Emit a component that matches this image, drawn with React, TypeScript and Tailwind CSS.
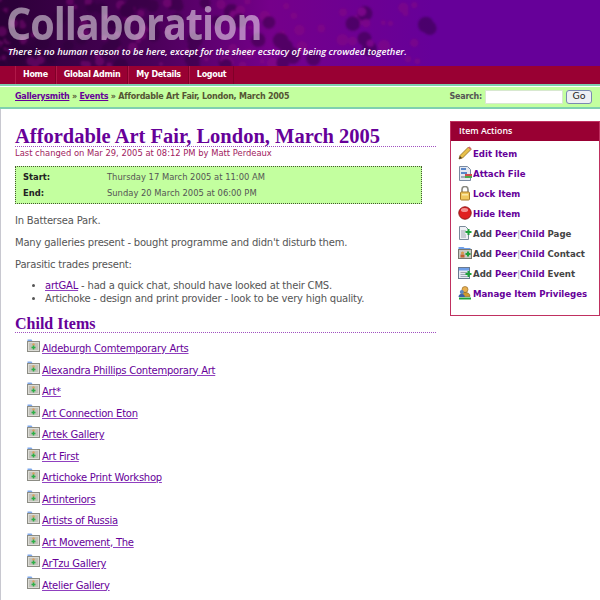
import React from "react";

const V = "font-['DejaVu_Sans','Liberation_Sans',sans-serif]";
const G = "font-['Liberation_Serif',serif]";

function FolderIcon() {
  return (
    <svg width="13" height="13" viewBox="0 0 13 13" className="shrink-0">
      <path d="M.5 .5h4l1 1.500h6v2H.5z" fill="#7fa8ea" />
      <rect x="0.5" y="2.500" width="12" height="10" fill="#dcdcd6" stroke="#8c8c84" />
      <rect x="2" y="4" width="9" height="7" fill="#c2c2ba" />
      <circle cx="6.500" cy="5.500" r="1.200" fill="#d8a060" />
      <path d="M6.500 6.500v4M4.500 8.500h4" stroke="#2bae45" strokeWidth="1.500" />
    </svg>
  );
}

function ActionIcon({ kind }: { kind: string }) {
  if (kind === "edit")
    return (
      <svg width="14" height="15" viewBox="0 0 14 15">
        <path d="M1 13l1-3.500L10.500 1 13 3.500 4.500 12z" fill="#e8c04a" stroke="#8a6a20" strokeWidth="0.8" />
        <path d="M1 13l1-3 2 2z" fill="#4a3a20" />
        <path d="M10 1.500l2.500 2.500 1-1.500L11.500 .5z" fill="#d06a6a" />
      </svg>
    );
  if (kind === "file")
    return (
      <svg width="14" height="15" viewBox="0 0 14 15">
        <path d="M1.500 .5h8l3 3v11h-11z" fill="#e4e8f0" stroke="#7a8aa0" />
        <rect x="3" y="2" width="5" height="2" fill="#5a86c8" />
        <rect x="3" y="6" width="6" height="2" fill="#5a86c8" />
        <rect x="7" y="8" width="7" height="2" fill="#d04a4a" />
        <rect x="7" y="10" width="7" height="2" fill="#4aa84a" />
        <rect x="3" y="10" width="4" height="2" fill="#a0a8b8" />
      </svg>
    );
  if (kind === "lock")
    return (
      <svg width="14" height="15" viewBox="0 0 14 15">
        <path d="M4 6V3.500a3 3 0 0 1 6 0V6" fill="none" stroke="#8a8a80" strokeWidth="1.600" />
        <rect x="2.500" y="6" width="9" height="8" rx="1" fill="#f0c860" stroke="#a87a28" />
        <rect x="4" y="8" width="6" height="1.500" fill="#fae8a8" />
      </svg>
    );
  if (kind === "hide")
    return (
      <svg width="14" height="15" viewBox="0 0 14 15">
        <circle cx="7" cy="7" r="6.200" fill="#e02020" stroke="#901818" />
        <ellipse cx="6.500" cy="4" rx="3.600" ry="2" fill="#f49090" />
      </svg>
    );
  if (kind === "page")
    return (
      <svg width="14" height="15" viewBox="0 0 14 15">
        <path d="M1.500 .5h6l3 3v10h-9z" fill="#eef0f4" stroke="#7a8a9a" />
        <path d="M3 5h5M3 7h4M3 9h5M3 11h5" stroke="#a0a8b4" />
        <path d="M10.500 3v6M7.500 6h6" stroke="#1ea03a" strokeWidth="2" />
      </svg>
    );
  if (kind === "contact")
    return (
      <svg width="14" height="15" viewBox="0 0 14 15">
        <path d="M.5 1h5l1 1h6v3H.5z" fill="#6f9fe8" />
        <rect x="0.5" y="3.500" width="13" height="9" fill="#c9c9c4" stroke="#77776f" />
        <circle cx="4.500" cy="7" r="1.600" fill="#d89a50" />
        <rect x="2.500" y="8.500" width="4" height="3" fill="#c06030" />
        <path d="M10 5.500v5M7.500 8h5" stroke="#1ea03a" strokeWidth="2" />
      </svg>
    );
  if (kind === "event")
    return (
      <svg width="14" height="15" viewBox="0 0 14 15">
        <rect x="0.5" y="1.500" width="11" height="11" fill="#e6eaf2" stroke="#6a7a90" />
        <rect x="1" y="2" width="10" height="2.500" fill="#6f9fe8" />
        <path d="M2.500 6.500h7M2.500 8.500h7M2.500 10.500h7" stroke="#a0a8b4" />
        <path d="M10.500 5v6M7.500 8h6" stroke="#1ea03a" strokeWidth="2" />
      </svg>
    );
  return (
    <svg width="14" height="15" viewBox="0 0 14 15">
      <circle cx="7" cy="3.500" r="3" fill="#e8b050" stroke="#8a6020" strokeWidth="0.6" />
      <path d="M2 10.500c0-3 2-4 5-4s5 1 5 4z" fill="#d09a30" stroke="#7a5a18" strokeWidth="0.6" />
      <circle cx="3.800" cy="6" r="2" fill="#5a86c8" />
      <path d="M.5 11c0-2 1.400-3 3.300-3s3 1 3 3z" fill="#3a5ea8" />
      <path d="M1 12.500h12" stroke="#1ea03a" strokeWidth="2" />
    </svg>
  );
}

const children = [
  "Aldeburgh Comtemporary Arts",
  "Alexandra Phillips Contemporary Art",
  "Art*",
  "Art Connection Eton",
  "Artek Gallery",
  "Art First",
  "Artichoke Print Workshop",
  "Artinteriors",
  "Artists of Russia",
  "Art Movement, The",
  "ArTzu Gallery",
  "Atelier Gallery",
];

// Mottled crowd texture of the banner, computed once from a fixed seed.
const blotches = Array.from({ length: 170 }, (_, i) => {
  const a = Math.abs(Math.sin(i * 12.9898) * 43758.5453) % 1;
  const b = Math.abs(Math.sin(i * 78.233) * 24634.6345) % 1;
  const c = Math.abs(Math.sin(i * 39.425) * 11234.123) % 1;
  const x = a * a * 430;
  return { x, y: b * 66, r: 2 + c * 6, dark: x < 240 ? c > 0.5 : c > 0.7 };
});

function Plain({ kind, text }: { kind: string; text: string }) {
  return (
    <div className="flex h-5 items-center">
      <div className="flex w-[15px] -translate-y-[1px] justify-start"><ActionIcon kind={kind} /></div>
      <a className="font-bold text-[#660099]">{text}</a>
    </div>
  );
}

function Add({ kind, what }: { kind: string; what: string }) {
  return (
    <div className="flex h-5 items-center">
      <div className="flex w-[15px] -translate-y-[1px] justify-start"><ActionIcon kind={kind} /></div>
      <span className="font-bold text-[#444444]">
        Add <a className="text-[#660099]">Peer</a><span className="font-normal text-[#a9a9c0]">|</span><a className="text-[#660099]">Child</a> {what}
      </span>
    </div>
  );
}

export default function App() {
  return (
    <div className={`${V} h-[600px] w-[600px] overflow-hidden bg-white text-[10px] tracking-[-0.2px] text-[#555555]`}>
      <header className="relative h-[66px] overflow-hidden bg-[#660099]">
        <svg className="absolute inset-0" width="600" height="66" viewBox="0 0 600 66">
          <defs>
            <linearGradient id="fade" x1="0" x2="1" y1="0" y2="0">
              <stop offset="0" stopColor="#2c0038" />
              <stop offset="0.25" stopColor="#4a0058" />
              <stop offset="0.45" stopColor="#75008a" />
              <stop offset="0.72" stopColor="#660099" />
            </linearGradient>
            <filter id="bl"><feGaussianBlur stdDeviation="1.2" /></filter>
          </defs>
          <rect width="600" height="66" fill="url(#fade)" />
          <g filter="url(#bl)" opacity="0.45">
            {blotches.map((b, i) => (
              <circle key={i} cx={b.x} cy={b.y} r={b.r} fill={b.dark ? "#2c0038" : "#8a0a80"} />
            ))}
          </g>
        </svg>
        <div className="absolute top-px left-[6px] origin-left scale-x-[0.88] font-['Open_Sans',sans-serif] text-[45px] leading-[44px] font-bold tracking-[-1.2px] whitespace-nowrap text-white/50">
          Collaboration
        </div>
        <div className="absolute top-[45px] left-2 font-['Open_Sans',sans-serif] text-[9.4px] leading-[14px] font-semibold tracking-normal whitespace-nowrap text-white italic">
          There is no human reason to be here, except for the sheer ecstacy of being crowded together.
        </div>
      </header>

      <nav className="flex h-[18px] bg-[#990033] pl-[15px] text-[8px] font-bold tracking-[-0.3px] text-white">
        {["Home", "Global Admin", "My Details", "Logout"].map((n) => (
          <a key={n} className="flex items-center border-r border-l border-r-[#800028] border-l-[#b01848] px-[7px]">{n}</a>
        ))}
      </nav>

      <div className="flex h-[25px] items-center justify-between border-y-2 border-y-[#7fd0b0] bg-[#c3ff9f] pr-[8px] pl-[15px] text-[8px] tracking-[-0.25px] shadow-[inset_0_1px_0_#fff]">
        <div className="font-bold text-[#555533]">
          <a className="text-[#660099] underline">Gallerysmith</a> » <a className="text-[#660099] underline">Events</a> » Affordable Art Fair, London, March 2005
        </div>
        <div className="flex items-center font-bold">
          <span>Search:</span>
          <input className="mr-[3px] ml-[3px] h-[14px] w-[78px] border border-[#d8e8d0] bg-white" />
          <button className="flex h-[14px] w-[26px] items-center justify-center rounded-[3px] border border-[#7a8ab0] bg-[#eef0f4] text-[9.5px] font-normal tracking-normal text-[#222222]">Go</button>
        </div>
      </div>

      <div className="flex h-[491px] border-l border-[#c8c8d0] pl-[14px]">
        <main className="w-[421px] shrink-0 pt-[17px]">
          <h1 className={`${G} border-b border-dotted border-[#a050c0] text-[20.5px] leading-[20px] font-bold tracking-normal whitespace-nowrap text-[#660099]`}>
            Affordable Art Fair, London, March 2005
          </h1>
          <p className="text-[8.4px] leading-[12px] tracking-normal text-[#a02060]">Last changed on Mar 29, 2005 at 08:12 PM by Matt Perdeaux</p>
          <div className="mt-[7px] grid w-[407px] grid-cols-[84px_1fr] gap-y-[4px] border border-dotted border-[#445533] bg-[#c3ff9f] px-[7px] py-[4px] text-[8.4px] leading-[12px] tracking-normal">
            <b className="text-[#222222]">Start:</b><span>Thursday 17 March 2005 at 11:00 AM</span>
            <b className="text-[#222222]">End:</b><span>Sunday 20 March 2005 at 06:00 PM</span>
          </div>
          <p className="mt-[10px] leading-[13px]">In Battersea Park.</p>
          <p className="mt-[9px] leading-[13px]">Many galleries present - bought programme and didn't disturb them.</p>
          <p className="mt-[9px] leading-[13px]">Parasitic trades present:</p>
          <ul className="mt-[9px] list-disc pl-[30px] leading-[12.5px]">
            <li><a className="text-[#660099] underline decoration-[#9040c0]">artGAL</a> - had a quick chat, should have looked at their CMS.</li>
            <li>Artichoke - design and print provider - look to be very high quality.</li>
          </ul>
          <h2 className={`${G} mt-[10px] border-b border-dotted border-[#a050c0] text-[16px] leading-[17px] font-bold tracking-normal text-[#660099]`}>Child Items</h2>
          <ul className="mt-[6px] pl-[12px] tracking-[-0.25px]">
            {children.map((c) => (
              <li key={c} className="flex h-[21.5px] items-start gap-[3px] leading-[13px]">
                <FolderIcon />
                <a className="-ml-px mt-[3px] text-[#660099] underline decoration-[#9040c0]">{c}</a>
              </li>
            ))}
          </ul>
        </main>
        <aside className="mt-[12px] ml-[14px] h-[195px] w-[150px] border border-[#c03060]">
          <div className="flex h-[19px] items-center bg-[#990033] pl-2 font-['Open_Sans',sans-serif] text-[8.800px] font-semibold tracking-normal text-white">Item Actions</div>
          <div className="pt-[3px] pl-[7px] text-[8.600px] tracking-normal">
            <Plain kind="edit" text="Edit Item" />
            <Plain kind="file" text="Attach File" />
            <Plain kind="lock" text="Lock Item" />
            <Plain kind="hide" text="Hide Item" />
            <Add kind="page" what="Page" />
            <Add kind="contact" what="Contact" />
            <Add kind="event" what="Event" />
            <Plain kind="priv" text="Manage Item Privileges" />
          </div>
        </aside>
      </div>
    </div>
  );
}
